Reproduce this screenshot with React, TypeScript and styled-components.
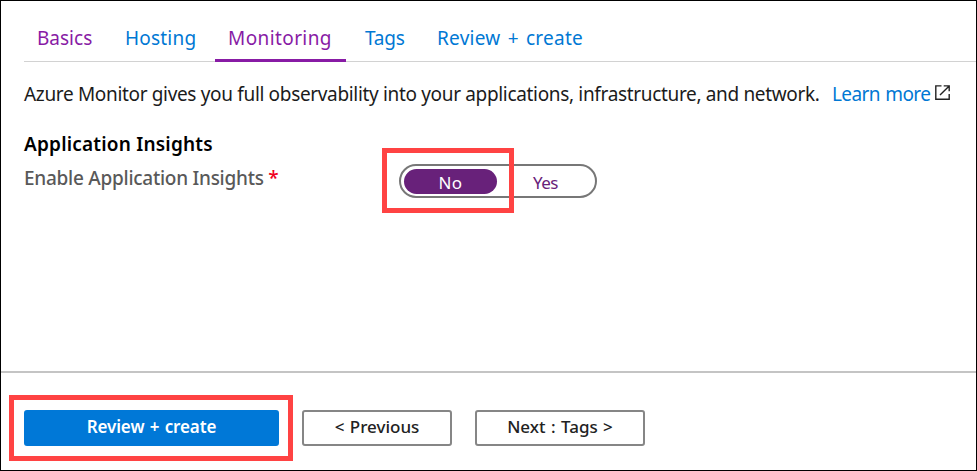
import React from "react";
import styled, { createGlobalStyle } from "styled-components";

const GlobalStyle = createGlobalStyle`
  * { box-sizing: border-box; }
  body { margin: 0; background: #fff; }
`;

const Page = styled.main`
  width: 977px;
  height: 471px;
  border: 1px solid #000;
  background: #fff;
  display: flex;
  flex-direction: column;
  overflow: hidden;
  font-family: "Noto Sans", "Open Sans", sans-serif;
  font-size: 19px;
  color: #1b1b1b;
`;

const TabBar = styled.nav`
  display: flex;
  flex-shrink: 0;
  gap: 6px;
  height: 61px;
  margin-left: 23px;
  padding-top: 16px;
  border-bottom: 1px solid #d2d2d2;
`;

const Tab = styled.a<{ $width: number; $tracking: number; $visited?: boolean; $active?: boolean }>`
  width: ${(p) => p.$width}px;
  height: 45px;
  padding-left: 13px;
  line-height: 42px;
  white-space: nowrap;
  letter-spacing: ${(p) => p.$tracking}px;
  word-spacing: 2px;
  color: ${(p) => (p.$visited ? "#881ba5" : "#0078d4")};
  border-bottom: 3px solid ${(p) => (p.$active ? "#881ba5" : "transparent")};
`;

const Intro = styled.p`
  display: flex;
  flex-shrink: 0;
  align-items: center;
  height: 30px;
  margin: 17px 0 0 23px;
  white-space: nowrap;
`;

const IntroText = styled.span`
  width: 808px;
  letter-spacing: -0.335px;
`;

const LearnMore = styled.a`
  width: 103px;
  color: #0078d4;
  letter-spacing: -0.6px;
  word-spacing: 1px;
`;

const LinkIcon = styled.svg`
  width: 15px;
  height: 15px;
  margin-top: -4px;
`;

const Section = styled.section`
  display: flex;
  flex-shrink: 0;
  height: 264px;
  padding: 20px 0 0 23px;
  border-bottom: 2px solid #c4c4c4;
`;

const Labels = styled.div`
  width: 358px;
`;

const Heading = styled.h2`
  margin: 0;
  font-size: 19px;
  font-weight: 600;
  line-height: 30px;
  letter-spacing: 0.2px;
  color: #000;
`;

const Label = styled.label`
  display: block;
  margin-top: 4px;
  font-weight: 500;
  line-height: 30px;
  letter-spacing: -0.26px;
  color: #595959;
`;

const Required = styled.span`
  color: #f00020;
`;

const Switch = styled.div`
  position: relative;
  display: flex;
  width: 198px;
  height: 34px;
  margin: 35px 0 0 17px;
  padding: 3px;
  border: 2px solid #777;
  border-radius: 17px;
`;

const Option = styled.button<{ $selected?: boolean }>`
  width: ${(p) => (p.$selected ? 93 : 95)}px;
  height: 25px;
  padding: 0 0 0 ${(p) => (p.$selected ? 0 : 2)}px;
  border: 0;
  border-radius: 13px;
  background: ${(p) => (p.$selected ? "#68217a" : "transparent")};
  color: ${(p) => (p.$selected ? "#fff" : "#68217a")};
  font: 400 17px/27px "Noto Sans", sans-serif;
  letter-spacing: ${(p) => (p.$selected ? 0.3 : -0.5)}px;
`;

const SwitchHighlight = styled.span`
  position: absolute;
  left: -19px;
  top: -18px;
  width: 132px;
  height: 65px;
  border: 5px solid #ff4343;
`;

const Footer = styled.footer`
  display: flex;
  padding: 37px 0 0 23px;
`;

const Action = styled.button<{ $width: number; $gap?: number; $primary?: boolean }>`
  position: relative;
  width: ${(p) => p.$width}px;
  height: 36px;
  margin-right: ${(p) => p.$gap ?? 0}px;
  padding: 0 0 2px;
  border: 2px solid ${(p) => (p.$primary ? "#0078d7" : "#868686")};
  border-radius: 3px;
  background: ${(p) => (p.$primary ? "#0078d7" : "#fff")};
  color: ${(p) => (p.$primary ? "#fff" : "#222")};
  font: ${(p) => (p.$primary ? 600 : 500)} 17px/30px "Noto Sans", sans-serif;
  letter-spacing: ${(p) => (p.$primary ? -0.1 : 0)}px;
  word-spacing: 1px;
  white-space: nowrap;
`;

const ActionHighlight = styled.span`
  position: absolute;
  left: -17px;
  top: -17px;
  width: 284px;
  height: 66px;
  border: 5px solid #ff4343;
`;

export default function App() {
  return (
    <>
      <GlobalStyle />
      <Page>
        <TabBar>
          <Tab $width={82} $tracking={0} $visited>Basics</Tab>
          <Tab $width={97} $tracking={0.2}>Hosting</Tab>
          <Tab $width={131} $tracking={0.4} $visited $active>Monitoring</Tab>
          <Tab $width={66} $tracking={-0.2}>Tags</Tab>
          <Tab $width={170} $tracking={0.25}>Review + create</Tab>
        </TabBar>
        <Intro>
          <IntroText>
            Azure Monitor gives you full observability into your applications, infrastructure, and network.
          </IntroText>
          <LearnMore>Learn more</LearnMore>
          <LinkIcon viewBox="0 0 15 15" fill="none" stroke="#222" strokeWidth="1.4">
            <path d="M6.5 .9H.8V14.2H14.2V9M8.7 .9H14.2V6.3M14.2 .9L5 10" />
          </LinkIcon>
        </Intro>
        <Section>
          <Labels>
            <Heading>Application Insights</Heading>
            <Label>
              Enable Application Insights <Required>*</Required>
            </Label>
          </Labels>
          <Switch>
            <Option $selected>No</Option>
            <Option>Yes</Option>
            <SwitchHighlight />
          </Switch>
        </Section>
        <Footer>
          <Action $width={255} $gap={23} $primary>
            Review + create
            <ActionHighlight />
          </Action>
          <Action $width={150} $gap={23}>&lt; Previous</Action>
          <Action $width={170}>Next : Tags &gt;</Action>
        </Footer>
      </Page>
    </>
  );
}
